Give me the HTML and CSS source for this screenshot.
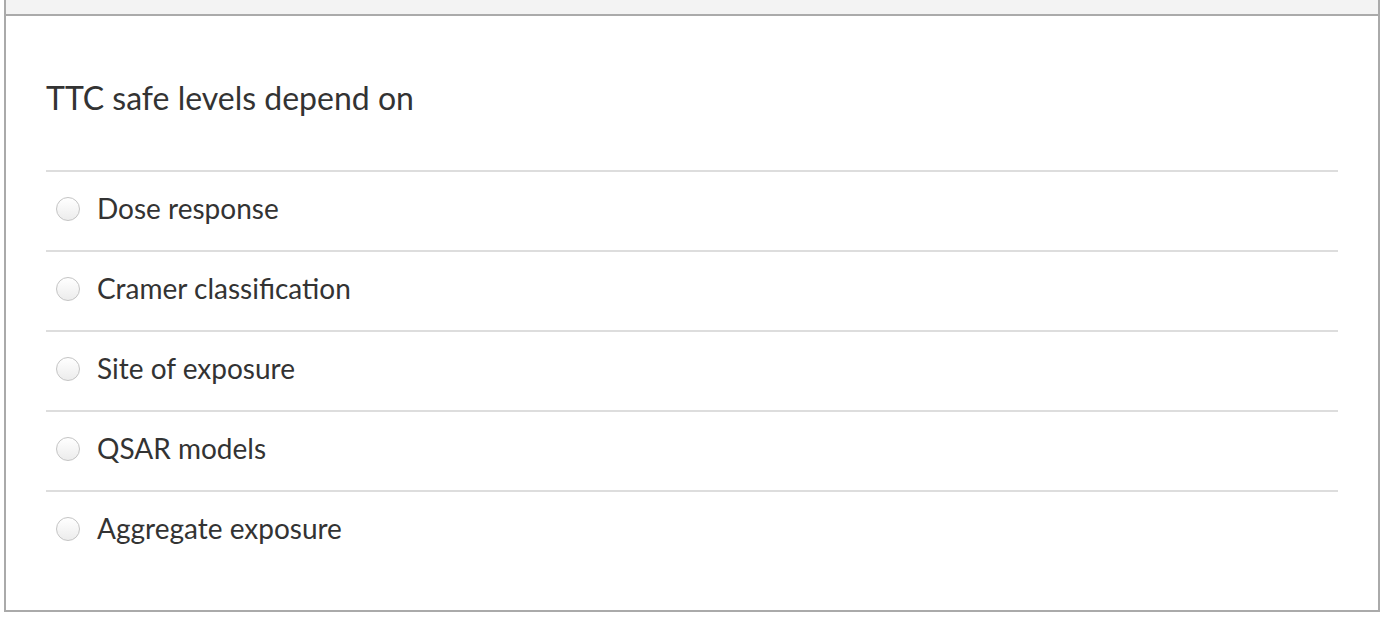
FILE: index.html
```html
<!DOCTYPE html>
<html>
<head>
<meta charset="utf-8">
<link rel="stylesheet" href="styles.css">
</head>
<body>
<div class="question">
  <div class="question-header"></div>
  <div class="question-body">
    <div class="question-text">TTC safe levels depend on</div>
    <div class="answers">
      <label class="answer"><span class="radio"></span><span class="answer-text">Dose response</span></label>
      <label class="answer"><span class="radio"></span><span class="answer-text">Cramer classification</span></label>
      <label class="answer"><span class="radio"></span><span class="answer-text">Site of exposure</span></label>
      <label class="answer"><span class="radio"></span><span class="answer-text">QSAR models</span></label>
      <label class="answer"><span class="radio"></span><span class="answer-text">Aggregate exposure</span></label>
    </div>
  </div>
</div>
</body>
</html>
```
FILE: styles.css
```css
html, body {
  margin: 0;
  padding: 0;
  background: #fff;
}
body {
  font-family: Lato, "Open Sans", sans-serif;
  color: #333;
}
.question {
  margin: 0 2px 0 4px;
  border: 2px solid #aaa;
  border-top: none;
}
.question-header {
  height: 14px;
  background: #f3f3f3;
  border-bottom: 2px solid #aaa;
}
.question-body {
  padding: 61px 40px 40px 40px;
}
.question-text {
  font-size: 32px;
  line-height: 42px;
  margin-bottom: 51px;
}
.answers {
  display: flex;
  flex-direction: column;
}
.answer {
  display: flex;
  align-items: center;
  height: 72px;
  padding-bottom: 6px;
  border-top: 2px solid #ddd;
  font-size: 28px;
}
.radio {
  width: 22px;
  height: 22px;
  border: 1px solid #c4c4c4;
  border-radius: 50%;
  background: linear-gradient(#ffffff, #ececec);
  margin: 2px 17px 0 10px;
  flex: none;
}
```
